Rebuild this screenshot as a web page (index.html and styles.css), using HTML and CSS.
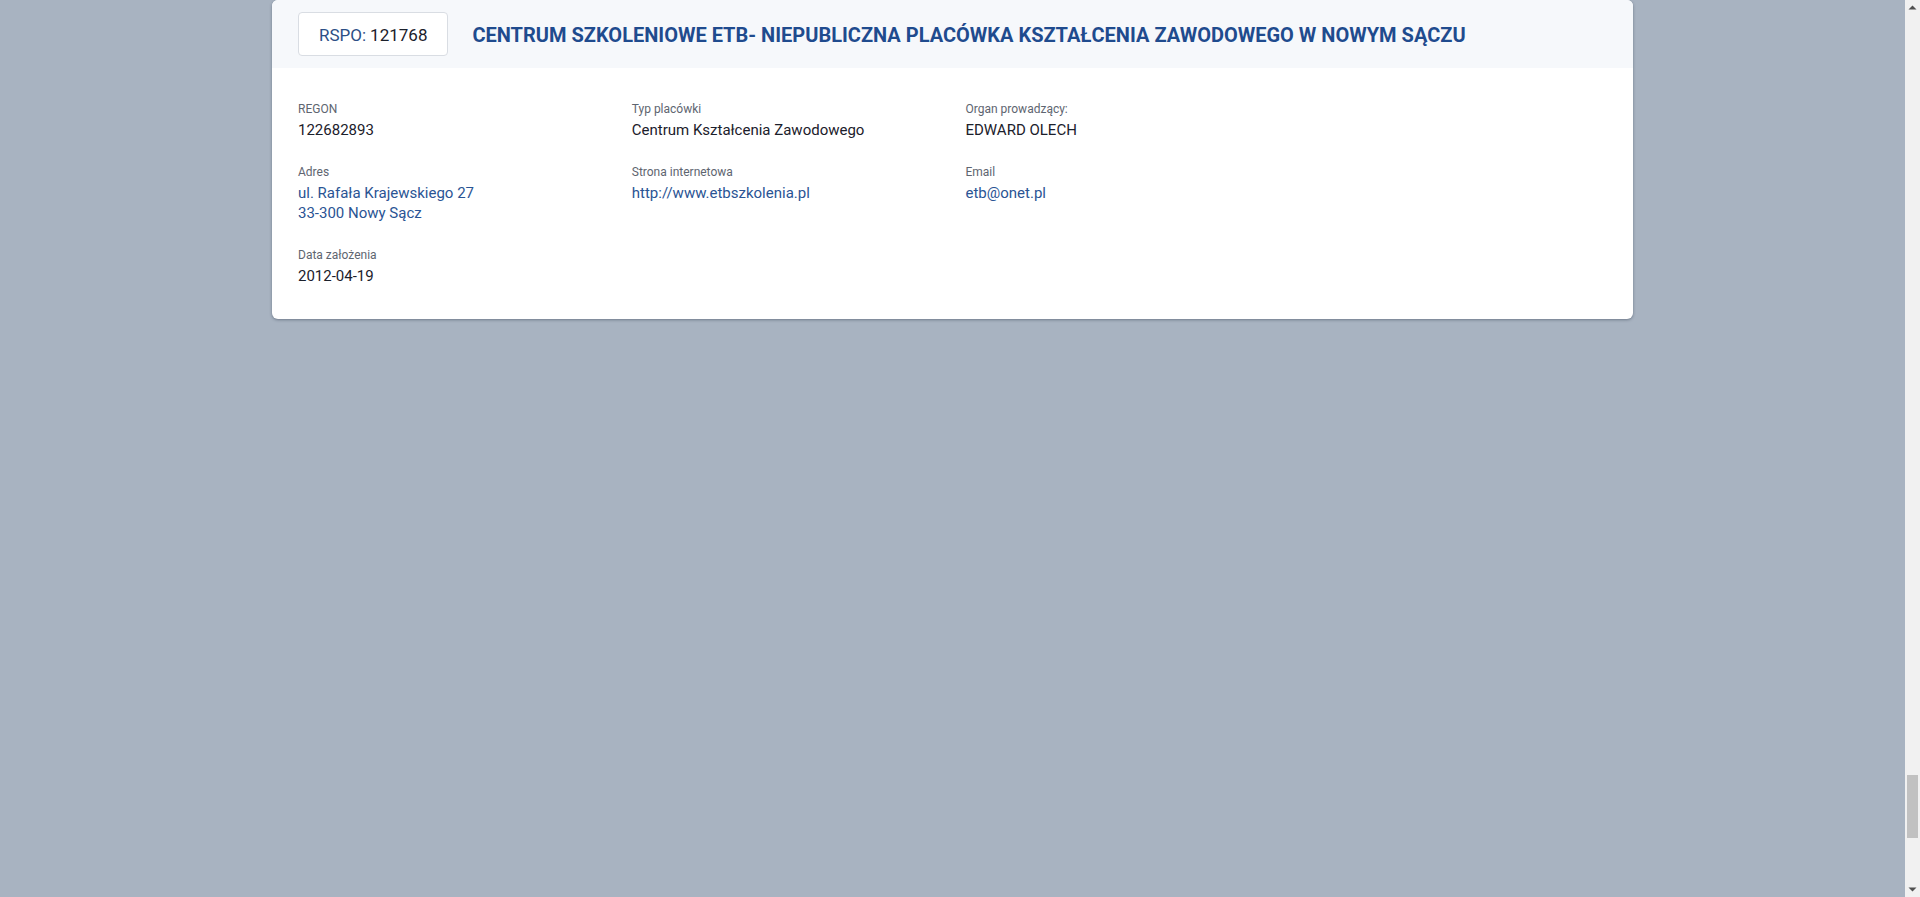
FILE: index.html
```html
<!DOCTYPE html>
<html lang="pl">
<head>
<meta charset="utf-8">
<title>Placówki RSPO</title>
<link rel="stylesheet" href="styles.css">
</head>
<body>
<div class="viewport">
  <main class="list">
    <article class="card">
      <header class="card-head">
        <div class="rspo"><span class="rspo-label">RSPO:</span> 121768</div>
        <h2 class="card-title">CENTRUM SZKOLENIOWE ETB- NIEPUBLICZNA PLACÓWKA KSZTAŁCENIA ZAWODOWEGO W NOWYM SĄCZU</h2>
      </header>
      <div class="card-body">
        <div class="field">
          <div class="label">REGON</div>
          <div class="value">122682893</div>
        </div>
        <div class="field">
          <div class="label">Typ placówki</div>
          <div class="value">Centrum Kształcenia Zawodowego</div>
        </div>
        <div class="field">
          <div class="label">Organ prowadzący:</div>
          <div class="value">EDWARD OLECH</div>
        </div>
        <div class="field">
          <div class="label">Adres</div>
          <div class="value"><a class="link" href="#">ul. Rafała Krajewskiego 27<br>33-300 Nowy Sącz</a></div>
        </div>
        <div class="field">
          <div class="label">Strona internetowa</div>
          <div class="value"><a class="link" href="#">http://www.etbszkolenia.pl</a></div>
        </div>
        <div class="field">
          <div class="label">Email</div>
          <div class="value"><a class="link" href="#">etb@onet.pl</a></div>
        </div>
        <div class="field">
          <div class="label">Data założenia</div>
          <div class="value">2012-04-19</div>
        </div>
      </div>
    </article>
  </main>
</div>
<div class="scrollbar" aria-hidden="true">
  <div class="sb-btn">
    <svg width="15" height="15" viewBox="0 0 15 15"><polygon points="3.5,9.5 11.5,9.5 7.5,5.5" fill="#505050"/></svg>
  </div>
  <div class="sb-track">
    <div class="sb-thumb"></div>
  </div>
  <div class="sb-btn">
    <svg width="15" height="15" viewBox="0 0 15 15"><polygon points="3.5,5.5 11.5,5.5 7.5,9.5" fill="#505050"/></svg>
  </div>
</div>
</body>
</html>
```

FILE: styles.css
```css
html,
body {
  height: 100%;
}
body {
  margin: 0;
  display: flex;
  overflow: hidden;
  background: #a8b3c1;
  font-family: Roboto, "Liberation Sans", Arial, sans-serif;
  color: #1b202b;
}
.viewport {
  flex: 1;
  min-width: 0;
  overflow: hidden;
}
.list {
  width: 1361px;
  margin: 0 auto;
}
.card {
  background: #ffffff;
  border-radius: 6px;
  box-shadow: 0 1px 3px rgba(40, 50, 70, 0.45);
  overflow: hidden;
}
.card-head {
  display: flex;
  align-items: center;
  gap: 24px;
  padding: 12px 26px;
  background: #f6f8fb;
}
.rspo {
  box-sizing: border-box;
  height: 44px;
  padding: 1px 20px 0;
  display: flex;
  align-items: center;
  gap: 4px;
  background: #ffffff;
  border: 1px solid #d9dde3;
  border-radius: 4px;
  font-size: 17px;
  color: #1b202b;
  white-space: nowrap;
}
.rspo-label {
  color: #2c4f86;
}
.card-title {
  margin: 0;
  padding-top: 1px;
  font-size: 20px;
  font-weight: 700;
  line-height: 28px;
  color: #1f4b8e;
}
.card-body {
  display: grid;
  grid-template-columns: repeat(3, 307.75px);
  column-gap: 26px;
  row-gap: 24px;
  padding: 33.2px 26px 33px;
}
.label {
  font-size: 12px;
  line-height: 16px;
  color: #5e6570;
  margin-bottom: 2.6px;
}
.value {
  font-size: 15px;
  line-height: 20.3px;
  color: #1b202b;
}
.link {
  color: #2a5494;
  text-decoration: none;
}
.scrollbar {
  flex: none;
  width: 15px;
  display: flex;
  flex-direction: column;
  background: #f1f1f1;
}
.sb-btn {
  flex: none;
  height: 15px;
}
.sb-btn svg {
  display: block;
}
.sb-track {
  flex: 1;
}
.sb-thumb {
  height: 63px;
  margin: 760px 2px 0;
  background: #c1c1c1;
}
```
